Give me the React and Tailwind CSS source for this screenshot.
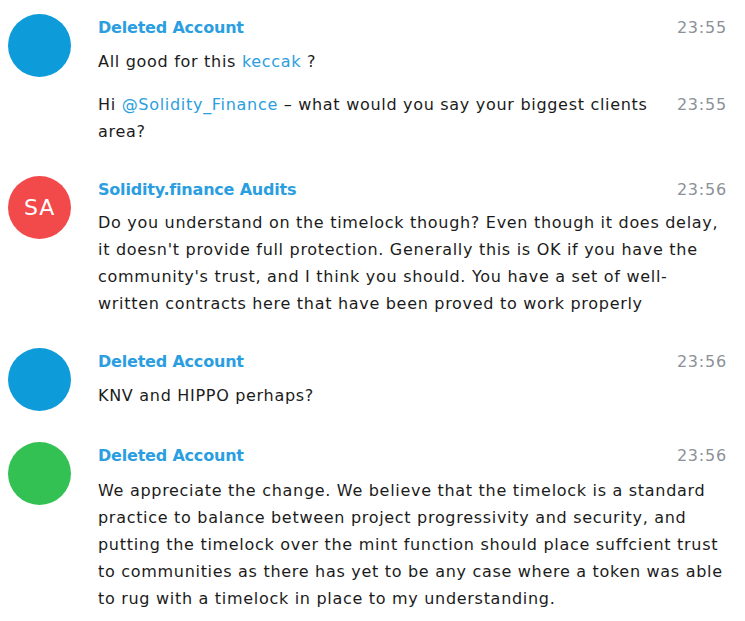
import React from "react";

const font = { fontFamily: '"DejaVu Sans", "Liberation Sans", sans-serif' };

function Avatar({ color, initials }) {
  return (
    <div
      className={`w-[63px] h-[63px] rounded-full shrink-0 flex items-center justify-center text-white text-[22px] ${color}`}
    >
      {initials}
    </div>
  );
}

function Group({ color, initials, name, time, children, className = "" }) {
  return (
    <div className={`flex pl-[8px] pr-[18px] ${className}`}>
      <Avatar color={color} initials={initials} />
      <div className="flex-1 ml-[27px]">
        <div className="flex justify-between leading-[27px]">
          <span className="text-[16px] font-bold tracking-[-0.2px] text-[#2a9ee0]">{name}</span>
          <span className="text-[16px] tracking-[0.8px] text-[#8b9197]">{time}</span>
        </div>
        {children}
      </div>
    </div>
  );
}

export default function App() {
  return (
    <div
      className="w-[745px] h-[621px] bg-white overflow-hidden pt-[14px] text-[#1b1b1b] text-[16px] leading-[27px] tracking-[0.7px]"
      style={font}
    >
      <Group color="bg-[#0e9bd9]" name="Deleted Account" time="23:55">
        <p className="mt-[7px]">
          All good for this <span className="text-[#2a9ee0]">keccak</span> ?
        </p>
        <div className="mt-[16px] flex justify-between">
          <p className="whitespace-nowrap">
            Hi <span className="text-[#2a9ee0]">@Solidity_Finance</span> – what would you say your biggest clients
            <br />
            area?
          </p>
          <span className="text-[#8b9197] tracking-[0.8px]">23:55</span>
        </div>
      </Group>

      <Group color="bg-[#f24a4a]" initials="SA" name="Solidity.finance Audits" time="23:56" className="mt-[31px]">
        <p className="mt-[6px] whitespace-nowrap">
          Do you understand on the timelock though? Even though it does delay,
          <br />
          it doesn't provide full protection. Generally this is OK if you have the
          <br />
          community's trust, and I think you should. You have a set of well-
          <br />
          written contracts here that have been proved to work properly
        </p>
      </Group>

      <Group color="bg-[#0e9bd9]" name="Deleted Account" time="23:56" className="mt-[31px]">
        <p className="mt-[7px]">KNV and HIPPO perhaps?</p>
      </Group>

      <Group color="bg-[#34c153]" name="Deleted Account" time="23:56" className="mt-[31px]">
        <p className="mt-[8px] whitespace-nowrap">
          We appreciate the change. We believe that the timelock is a standard
          <br />
          practice to balance between project progressivity and security, and
          <br />
          putting the timelock over the mint function should place suffcient trust
          <br />
          to communities as there has yet to be any case where a token was able
          <br />
          to rug with a timelock in place to my understanding.
        </p>
      </Group>
    </div>
  );
}
